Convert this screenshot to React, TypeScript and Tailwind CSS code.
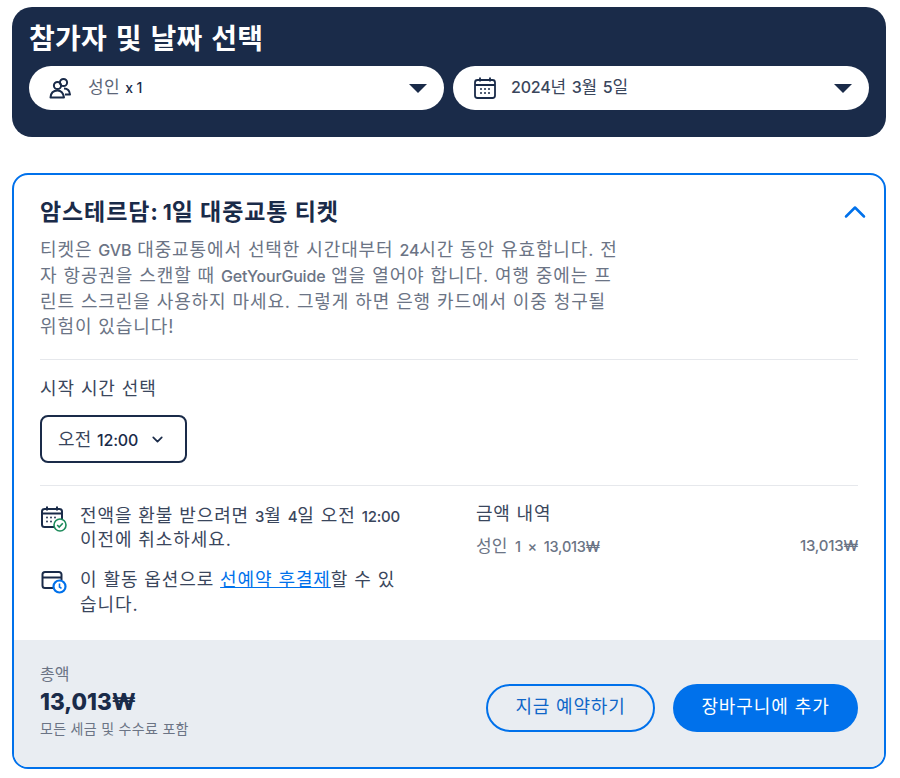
import type { ReactNode } from "react";
import { ChevronDown, ChevronUp } from "lucide-react";

const font = "font-['Inter','Noto_Sans_CJK_KR',sans-serif]";

// Latin and digits sit smaller than the hangul around them
function L({ children, className = "text-[16px]" }: { children: ReactNode; className?: string }) {
  return <span className={`font-medium tracking-[-0.2px] ${className}`}>{children}</span>;
}

function PeopleIcon() {
  return (
    <svg width="24" height="24" viewBox="0 0 24 24" fill="none" stroke="#1a2b49" strokeWidth="2">
      <circle cx="9.5" cy="9.5" r="3.6" />
      <circle cx="15.5" cy="6.5" r="3.6" />
      <path d="M2.5 21.5c.3-4.5 3-7 7-7s5.7 2 6.5 7z" strokeLinejoin="round" />
      <path d="M16 12.5c3.5 0 5.6 2 6 6h-5" strokeLinejoin="round" />
    </svg>
  );
}

function CalendarIcon({ size = 24 }: { size?: number }) {
  return (
    <svg width={size} height={size} viewBox="0 0 24 24" fill="none" stroke="#1a2b49" strokeWidth="1.8">
      <rect x="2" y="4" width="20" height="18" rx="2.5" />
      <path d="M2 9h20M7 1.5v4M17 1.5v4" />
      <g fill="#1a2b49" stroke="none">
        <circle cx="8" cy="13" r="1" />
        <circle cx="12" cy="13" r="1" />
        <circle cx="16" cy="13" r="1" />
        <circle cx="8" cy="17" r="1" />
        <circle cx="12" cy="17" r="1" />
        <circle cx="16" cy="17" r="1" />
      </g>
    </svg>
  );
}

function CancelIcon() {
  return (
    <svg width="28" height="28" viewBox="0 0 28 28" fill="none">
      <rect x="2" y="4" width="20" height="18" rx="2.5" stroke="#1a2b49" strokeWidth="2" />
      <path d="M2 8.5h20M7 1.5v4M17 1.5v4" stroke="#1a2b49" strokeWidth="2" />
      <g fill="#1a2b49">
        <circle cx="7" cy="12.5" r="0.9" />
        <circle cx="11" cy="12.5" r="0.9" />
        <circle cx="15" cy="12.5" r="0.9" />
        <circle cx="7" cy="16.5" r="0.9" />
        <circle cx="11" cy="16.5" r="0.9" />
      </g>
      <circle cx="20" cy="20" r="6" fill="#fff" stroke="#1b8a5a" strokeWidth="1.6" />
      <path d="M17.2 20l2 2 3.6-3.8" stroke="#1b8a5a" strokeWidth="1.6" />
    </svg>
  );
}

function PayLaterIcon() {
  return (
    <svg width="28" height="28" viewBox="0 0 28 28" fill="none">
      <path d="M16 20H5a2.5 2.5 0 0 1-2.5-2.5v-11A2.5 2.5 0 0 1 5 4h14a2.5 2.5 0 0 1 2.5 2.5V12" stroke="#1a2b49" strokeWidth="2" />
      <path d="M2.5 9.5h19" stroke="#1a2b49" strokeWidth="2" />
      <circle cx="19.5" cy="18.5" r="6" fill="#fff" stroke="#0071eb" strokeWidth="2.2" />
      <path d="M19.5 15.5v3.5l2 1.3" stroke="#0071eb" strokeWidth="1.6" />
    </svg>
  );
}

function Caret() {
  return <div className="w-0 h-0 border-x-[9px] border-x-transparent border-t-[9px] border-t-[#1a2b49]" />;
}

export default function App() {
  return (
    <div className={`${font} w-[900px] h-[778px] bg-white overflow-hidden pt-[7px] px-3 text-[#1a2b49]`}>
      <section className="w-[874px] h-[130px] rounded-[20px] bg-[#1a2b49] px-[17px] pt-[14px]">
        <h2 className="text-[28px] leading-[36px] font-bold text-white tracking-[0.2px] [word-spacing:2px]">참가자 및 날짜 선택</h2>
        <div className="mt-[9px] flex gap-[9px]">
          <div className="w-[415px] h-[44px] rounded-full bg-white flex items-center pl-[19px] pr-[17px]">
            <PeopleIcon />
            <span className="ml-[16px] text-[17px] tracking-[0.4px] text-[#5c6678]">
              성인 <L className="text-[14px] text-[#1a2b49]">x 1</L>
            </span>
            <div className="ml-auto"><Caret /></div>
          </div>
          <div className="w-[416px] h-[44px] rounded-full bg-white flex items-center pl-[20px] pr-[17px]">
            <CalendarIcon />
            <span className="ml-[14px] text-[17px] tracking-[0.4px] text-[#3a465c]">
              <L>2024</L>년 <L>3</L>월 <L>5</L>일
            </span>
            <div className="ml-auto"><Caret /></div>
          </div>
        </div>
      </section>

      <section className="mt-9 w-[874px] h-[596px] rounded-2xl border-2 border-[#0071eb] overflow-hidden flex flex-col">
        <div className="flex-1 px-[26px] pt-[21px]">
          <div className="flex items-center justify-between h-[32px]">
            <h3 className="text-[23px] font-bold tracking-[0.9px]">
              암스테르담:<span className="text-[12px]"> </span><span className="text-[21px] tracking-normal">1</span>일 대중교통 티켓
            </h3>
            <ChevronUp size={36} color="#0071eb" strokeWidth={1.7} className="-mr-[15px]" />
          </div>
          <p className="mt-[9px] text-[18px] leading-[25px] tracking-[0.9px] text-[#6b7485]">
            티켓은 <L>GVB</L> 대중교통에서 선택한 시간대부터 <L>24</L>시간 동안 유효합니다. 전<br />
            자 항공권을 스캔할 때 <L>GetYourGuide</L> 앱을 열어야 합니다. 여행 중에는 프<br />
            린트 스크린을 사용하지 마세요. 그렇게 하면 은행 카드에서 이중 청구될<br />
            위험이 있습니다!
          </p>
          <div className="mt-[20px] border-t border-[#e6e8ec]" />
          <p className="mt-[17px] text-[18px] leading-[24px] tracking-[0.9px] text-[#3a465c]">시작 시간 선택</p>
          <div className="mt-[14px] w-[147px] h-[48px] rounded-lg border-2 border-[#1a2b49] flex items-center pl-[16px] gap-[11px]">
            <span className="text-[18px] tracking-[0.3px] text-[#3a465c]">오전 <L className="text-[16px] text-[#1a2b49]">12:00</L></span>
            <ChevronDown size={17} strokeWidth={2.4} />
          </div>
          <div className="mt-[22px] border-t border-[#e6e8ec]" />
          <div className="mt-[18px] flex">
            <div className="w-[436px] flex flex-col gap-[16px]">
              <div className="flex gap-[12px]">
                <div className="mt-[1px] w-[28px]"><CancelIcon /></div>
                <p className="text-[18px] leading-[23px] tracking-[0.9px] text-[#3a465c]">
                  전액을 환불 받으려면 <L className="text-[15px]">3</L>월 <L className="text-[15px]">4</L>일 오전 <L className="text-[15px]">12:00</L><br />
                  이전에 취소하세요.
                </p>
              </div>
              <div className="flex gap-[12px]">
                <div className="mt-[1px] w-[28px]"><PayLaterIcon /></div>
                <p className="text-[18px] leading-[25px] tracking-[0.9px] text-[#3a465c]">
                  이 활동 옵션으로 <span className="text-[#0071eb] underline">선예약 후결제</span>할 수 있<br />
                  습니다.
                </p>
              </div>
            </div>
            <div className="flex-1 -mt-[3px]">
              <p className="text-[18px] leading-[26px] tracking-[0.8px] text-[#3a465c]">금액 내역</p>
              <div className="mt-[7px] flex justify-between text-[17px] leading-[24px] text-[#6b7485]">
                <span className="[word-spacing:3px]">성인 <L className="text-[14.5px]">1 × 13,013₩</L></span>
                <L className="text-[15px]">13,013₩</L>
              </div>
            </div>
          </div>
        </div>
        <div className="h-[127px] bg-[#e9edf2] px-[26px] flex items-start justify-between">
          <div className="pt-[24px]">
            <p className="text-[16px] leading-[20px] text-[#6b7485]">총액</p>
            <p className="mt-[2px] text-[22.5px] leading-[32px] font-extrabold">13,013₩</p>
            <p className="mt-[1px] text-[14px] leading-[20px] tracking-[0.3px] text-[#6b7485]">모든 세금 및 수수료 포함</p>
          </div>
          <div className="mt-[44px] flex gap-[18px]">
            <div className="w-[169px] h-[48px] pb-[3px] rounded-full border-2 border-[#0071eb] flex items-center justify-center text-[18px] tracking-[0.8px] text-[#0f66c8]">지금 예약하기</div>
            <div className="w-[185px] h-[48px] pb-[3px] rounded-full bg-[#0071eb] flex items-center justify-center text-[18px] tracking-[0.9px] text-white">장바구니에 추가</div>
          </div>
        </div>
      </section>
    </div>
  );
}
